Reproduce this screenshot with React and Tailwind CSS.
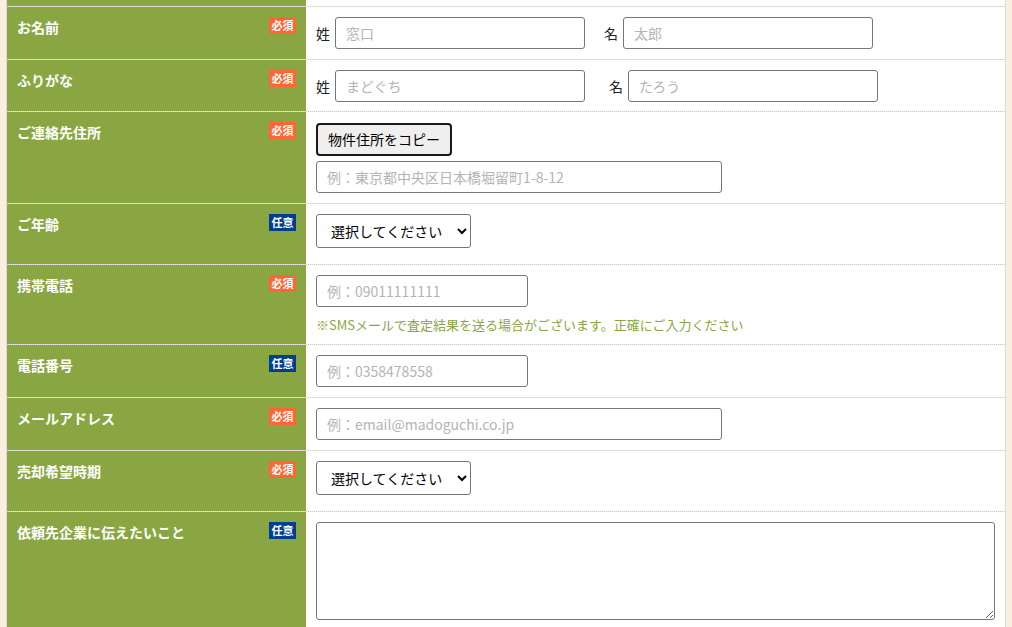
import React from 'react';

const font = { fontFamily: '"Noto Sans CJK JP", "Noto Sans", sans-serif' };

function Badge({ required }) {
  return required ? (
    <span className="flex h-[17px] w-[27px] shrink-0 items-center justify-center bg-[#ff6633] text-[11px] font-bold leading-none text-white">
      必須
    </span>
  ) : (
    <span className="flex h-[17px] w-[27px] shrink-0 items-center justify-center bg-[#003f8e] text-[11px] font-bold leading-none text-white">
      任意
    </span>
  );
}

function Row({ label, required, children, cellClass = 'py-[10px]' }) {
  return (
    <div className="flex border-b border-dotted border-[#c8c8c8]">
      <div className="flex w-[299px] shrink-0 items-start justify-between bg-[#8aa642] px-[10px] pt-[10px]">
        <span className="text-[14px] font-bold leading-[20px] text-white">{label}</span>
        <Badge required={required} />
      </div>
      <div className={`flex-1 bg-white pl-[10px] pr-[10px] ${cellClass}`}>{children}</div>
    </div>
  );
}

const inputCls =
  'h-[32px] rounded-[3px] border border-[#767676] bg-white px-[10px] text-[14px] text-[#333] placeholder:text-[#b4b4b4] outline-none';

function Select() {
  return (
    <select className="h-[34px] w-[155px] rounded-[3px] border border-[#767676] bg-white pl-[10px] pr-[2px] text-[14px] text-black outline-none">
      <option>選択してください</option>
    </select>
  );
}

export default function App() {
  return (
    <div className="min-h-[627px] bg-[#faeee0] px-[6px]" style={font}>
      <div className="border-x border-[#dcdcdc]">
        <div className="flex h-[7px] border-b border-dotted border-[#c8c8c8]">
          <div className="w-[299px] shrink-0 bg-[#8aa642]" />
          <div className="flex-1 bg-white" />
        </div>

        <Row label="お名前" required>
          <div className="flex items-center">
            <span className="mr-[5px] text-[14px] text-[#222]">姓</span>
            <input className={`${inputCls} w-[250px]`} placeholder="窓口" />
            <span className="ml-[19px] mr-[5px] text-[14px] text-[#222]">名</span>
            <input className={`${inputCls} w-[250px]`} placeholder="太郎" />
          </div>
        </Row>

        <Row label="ふりがな" required cellClass="pt-[10px] pb-[9px]">
          <div className="flex items-center">
            <span className="mr-[5px] text-[14px] text-[#222]">姓</span>
            <input className={`${inputCls} w-[250px]`} placeholder="まどぐち" />
            <span className="ml-[24px] mr-[5px] text-[14px] text-[#222]">名</span>
            <input className={`${inputCls} w-[250px]`} placeholder="たろう" />
          </div>
        </Row>

        <Row label="ご連絡先住所" required cellClass="pt-[11px] pb-[10px]">
          <div className="flex flex-col items-start gap-[5px]">
            <button className="h-[33px] w-[136px] rounded-[4px] border-2 border-[#1a1a1a] bg-[#efefef] text-[14px] text-black">
              物件住所をコピー
            </button>
            <input className={`${inputCls} w-[406px]`} placeholder="例：東京都中央区日本橋堀留町1-8-12" />
          </div>
        </Row>

        <Row label="ご年齢" cellClass="pt-[10px] pb-[16px]">
          <Select />
        </Row>

        <Row label="携帯電話" required cellClass="pt-[10px] pb-[9px]">
          <input className={`${inputCls} w-[212px]`} placeholder="例：09011111111" />
          <p className="mt-[8px] text-[13px] leading-[20px] text-[#8aa642]">
            ※SMSメールで査定結果を送る場合がございます。正確にご入力ください
          </p>
        </Row>

        <Row label="電話番号">
          <input className={`${inputCls} w-[212px]`} placeholder="例：0358478558" />
        </Row>

        <Row label="メールアドレス" required>
          <input className={`${inputCls} w-[406px]`} placeholder="例：email@madoguchi.co.jp" />
        </Row>

        <Row label="売却希望時期" required cellClass="pt-[10px] pb-[16px]">
          <Select />
        </Row>

        <div className="flex">
          <div className="flex w-[299px] shrink-0 items-start justify-between bg-[#8aa642] px-[10px] pt-[10px]">
            <span className="text-[14px] font-bold leading-[20px] text-white">依頼先企業に伝えたいこと</span>
            <Badge />
          </div>
          <div className="flex-1 bg-white px-[10px] pt-[10px] pb-[10px]">
            <textarea className="block h-[98px] w-full rounded-[3px] border border-[#767676] bg-white p-[8px] text-[14px] outline-none" />
          </div>
        </div>
      </div>
    </div>
  );
}
